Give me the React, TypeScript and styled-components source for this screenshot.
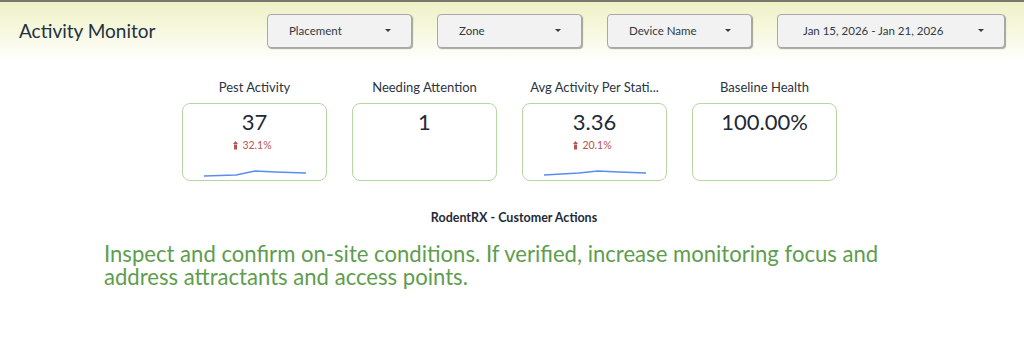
import React from 'react';
import styled, { createGlobalStyle } from 'styled-components';

const GlobalStyle = createGlobalStyle`
  html, body {
    margin: 0;
    padding: 0;
    background: #ffffff;
  }
  body {
    font-family: 'Lato', 'Open Sans', sans-serif;
  }
`;

const Page = styled.div`
  width: 1024px;
  height: 348px;
  overflow: hidden;
  background: #ffffff;
  border-top: 2px solid #77776d;
  box-sizing: border-box;
`;

const Header = styled.div`
  height: 60px;
  display: flex;
  align-items: center;
  padding-left: 19px;
  background: linear-gradient(to bottom, #eef1c6 0%, #f6f8de 45%, #ffffff 100%);
`;

const Title = styled.div`
  width: 248px;
  font-size: 19px;
  color: #233142;
  margin-top: -3px;
`;

const Filters = styled.div`
  display: flex;
  gap: 25px;
  margin-top: -3px;
`;

const Dropdown = styled.div<{ $w: number }>`
  width: ${(p) => p.$w}px;
  height: 34px;
  box-sizing: border-box;
  background: #f2f2f2;
  border: 1px solid #a8a8a8;
  border-radius: 4px;
  box-shadow: 1px 1px 1px rgba(0, 0, 0, 0.35);
  display: flex;
  align-items: center;
  justify-content: space-between;
  padding: 0 20px 0 21px;
  font-size: 11.5px;
  color: #2f3a45;
`;

const DateLabel = styled.span`
  padding-left: 4px;
`;

const Caret = styled.span`
  width: 0;
  height: 0;
  border-left: 3px solid transparent;
  border-right: 3px solid transparent;
  border-top: 3px solid #333d47;
`;

const Cards = styled.div`
  display: flex;
  gap: 25px;
  padding-left: 182px;
  margin-top: 17px;
`;

const Kpi = styled.div`
  width: 145px;
  display: flex;
  flex-direction: column;
  align-items: center;
`;

const KpiTitle = styled.div`
  font-size: 13px;
  color: #2b3440;
  height: 24px;
  white-space: nowrap;
`;

const Card = styled.div`
  width: 145px;
  height: 78px;
  box-sizing: border-box;
  border: 1px solid #b6d6a6;
  border-radius: 8px;
  display: flex;
  flex-direction: column;
  align-items: center;
  position: relative;
`;

const Value = styled.div`
  font-size: 22px;
  color: #1f2a38;
  margin-top: 5px;
  line-height: 26px;
`;

const Trend = styled.div`
  display: flex;
  align-items: center;
  gap: 4px;
  font-size: 10.5px;
  color: #c0504d;
  margin-top: 4px;
  margin-left: -4px;
`;

const Spark = styled.svg`
  position: absolute;
  left: 20px;
  bottom: 2px;
`;

const Section = styled.div`
  text-align: center;
  font-weight: 700;
  font-size: 12.5px;
  color: #1f2a38;
  margin-top: 29px;
  padding-left: 4px;
`;

const Advice = styled.div`
  color: #5e9d4d;
  font-size: 22.1px;
  line-height: 23px;
  padding-left: 104px;
  margin-top: 17px;
  width: 840px;
`;

const UpArrow = () => (
  <svg width="5" height="9" viewBox="0 0 5 9">
    <path d="M2.5 0 L5 3 L0 3 Z" fill="#c0504d" />
    <rect x="1" y="3.5" width="3" height="5" fill="#c0504d" />
  </svg>
);

interface KpiProps {
  title: string;
  value: string;
  trend?: string;
  points?: string;
}

const KpiCard: React.FC<KpiProps> = ({ title, value, trend, points }) => (
  <Kpi>
    <KpiTitle>{title}</KpiTitle>
    <Card>
      <Value>{value}</Value>
      {trend && (
        <Trend>
          <UpArrow />
          {trend}
        </Trend>
      )}
      {points && (
        <Spark width="104" height="10" viewBox="0 0 104 10">
          <polyline points={points} fill="none" stroke="#5b8def" strokeWidth="1.4" />
        </Spark>
      )}
    </Card>
  </Kpi>
);

export default function App() {
  return (
    <>
      <GlobalStyle />
      <Page>
        <Header>
          <Title>Activity Monitor</Title>
          <Filters>
            <Dropdown $w={145}>
              <span>Placement</span>
              <Caret />
            </Dropdown>
            <Dropdown $w={145}>
              <span>Zone</span>
              <Caret />
            </Dropdown>
            <Dropdown $w={145}>
              <span>Device Name</span>
              <Caret />
            </Dropdown>
            <Dropdown $w={228}>
              <DateLabel>Jan 15, 2026 - Jan 21, 2026</DateLabel>
              <Caret />
            </Dropdown>
          </Filters>
        </Header>
        <Cards>
          <KpiCard title="Pest Activity" value="37" trend="32.1%" points="1,8 33,7 52,3 72,4 103,5" />
          <KpiCard title="Needing Attention" value="1" />
          <KpiCard title="Avg Activity Per Stati..." value="3.36" trend="20.1%" points="1,7 36,5 55,3 76,4 103,5" />
          <KpiCard title="Baseline Health" value="100.00%" />
        </Cards>
        <Section>RodentRX - Customer Actions</Section>
        <Advice>
          Inspect and confirm on-site conditions. If verified, increase monitoring focus and address attractants and access points.
        </Advice>
      </Page>
    </>
  );
}
